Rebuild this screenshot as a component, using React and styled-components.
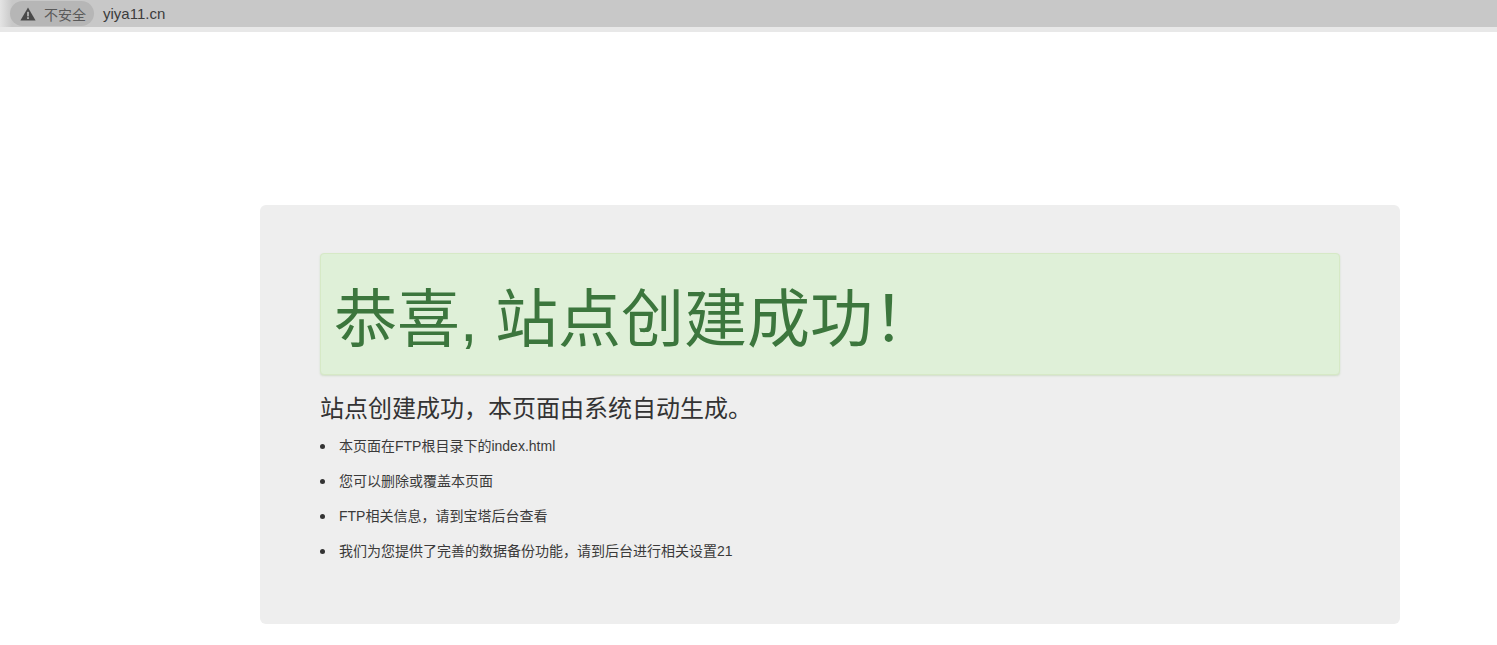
import React from "react";
import styled, { createGlobalStyle } from "styled-components";

const GlobalStyle = createGlobalStyle`
  html, body {
    margin: 0;
    padding: 0;
    background: #fff;
  }
  body {
    font-family: "Liberation Sans", "Noto Sans CJK SC", Arial, sans-serif;
    color: #333;
  }
`;

const WarningIcon = () => (
  <svg width="16" height="14" viewBox="0 0 16 14">
    <path d="M8 0.5 L15.6 13.5 H0.4 Z" fill="#4a4a4a" />
    <rect x="7.1" y="4.8" width="1.8" height="4.6" fill="#b4b4b4" />
    <rect x="7.1" y="10.2" width="1.8" height="1.8" fill="#b4b4b4" />
  </svg>
);

const items = [
  "本页面在FTP根目录下的index.html",
  "您可以删除或覆盖本页面",
  "FTP相关信息，请到宝塔后台查看",
  "我们为您提供了完善的数据备份功能，请到后台进行相关设置21",
];

export default function App() {
  return (
    <>
      <GlobalStyle />
      <AddressBar>
        <SecurityChip>
          <WarningIcon />
          <ChipLabel>不安全</ChipLabel>
        </SecurityChip>
        <Url>yiya11.cn</Url>
      </AddressBar>
      <BarEdge />
      <Page>
        <Panel>
          <Alert>
            <Title>恭喜, 站点创建成功！</Title>
          </Alert>
          <Lead>站点创建成功，本页面由系统自动生成。</Lead>
          <List>
            {items.map((t) => (
              <Item key={t}>{t}</Item>
            ))}
          </List>
        </Panel>
      </Page>
    </>
  );
}

const AddressBar = styled.div`
  display: flex;
  align-items: center;
  height: 27px;
  padding-left: 10px;
  background: linear-gradient(to right, #e4e4e4 0, #c8c8c8 12px);
`;

const BarEdge = styled.div`
  height: 5px;
  background: #e8e8e8;
  box-sizing: border-box;
`;

const SecurityChip = styled.div`
  display: flex;
  align-items: center;
  gap: 8px;
  height: 25px;
  width: 84px;
  padding-left: 10px;
  box-sizing: border-box;
  border-radius: 13px;
  background: #b6b6b6;
`;

const ChipLabel = styled.span`
  font-size: 14px;
  color: #5a5a5a;
`;

const Url = styled.span`
  margin-left: 9px;
  font-size: 15px;
  color: #3c3c3c;
`;

const Page = styled.div`
  display: flex;
  padding: 173px 97px 0 260px;
`;

const Panel = styled.div`
  flex: 1;
  height: 419px;
  box-sizing: border-box;
  padding: 48px 60px 0;
  border-radius: 6px;
  background: #eee;
`;

const Alert = styled.div`
  height: 122px;
  box-sizing: border-box;
  display: flex;
  align-items: center;
  padding: 12px 0 0 13px;
  border: 1px solid #d6e9c6;
  border-radius: 4px;
  background: #dff0d8;
  box-shadow: 0 1px 2px rgba(120, 170, 90, 0.25);
`;

const Title = styled.h1`
  margin: 0;
  font-size: 63px;
  font-weight: 400;
  line-height: 1.1;
  color: #3c763d;
`;

const Lead = styled.p`
  margin: 17px 0 0;
  font-size: 24px;
  font-weight: 400;
  line-height: 34px;
  color: #333;
`;

const List = styled.ul`
  margin: 10px 0 0;
  padding: 0;
  list-style: none;
`;

const Item = styled.li`
  display: flex;
  align-items: center;
  margin-bottom: 15px;
  font-size: 14px;
  line-height: 20px;
  color: #3a3a3a;

  &::before {
    content: "";
    width: 5px;
    height: 5px;
    margin-right: 14px;
    border-radius: 50%;
    background: #333;
  }
`;
